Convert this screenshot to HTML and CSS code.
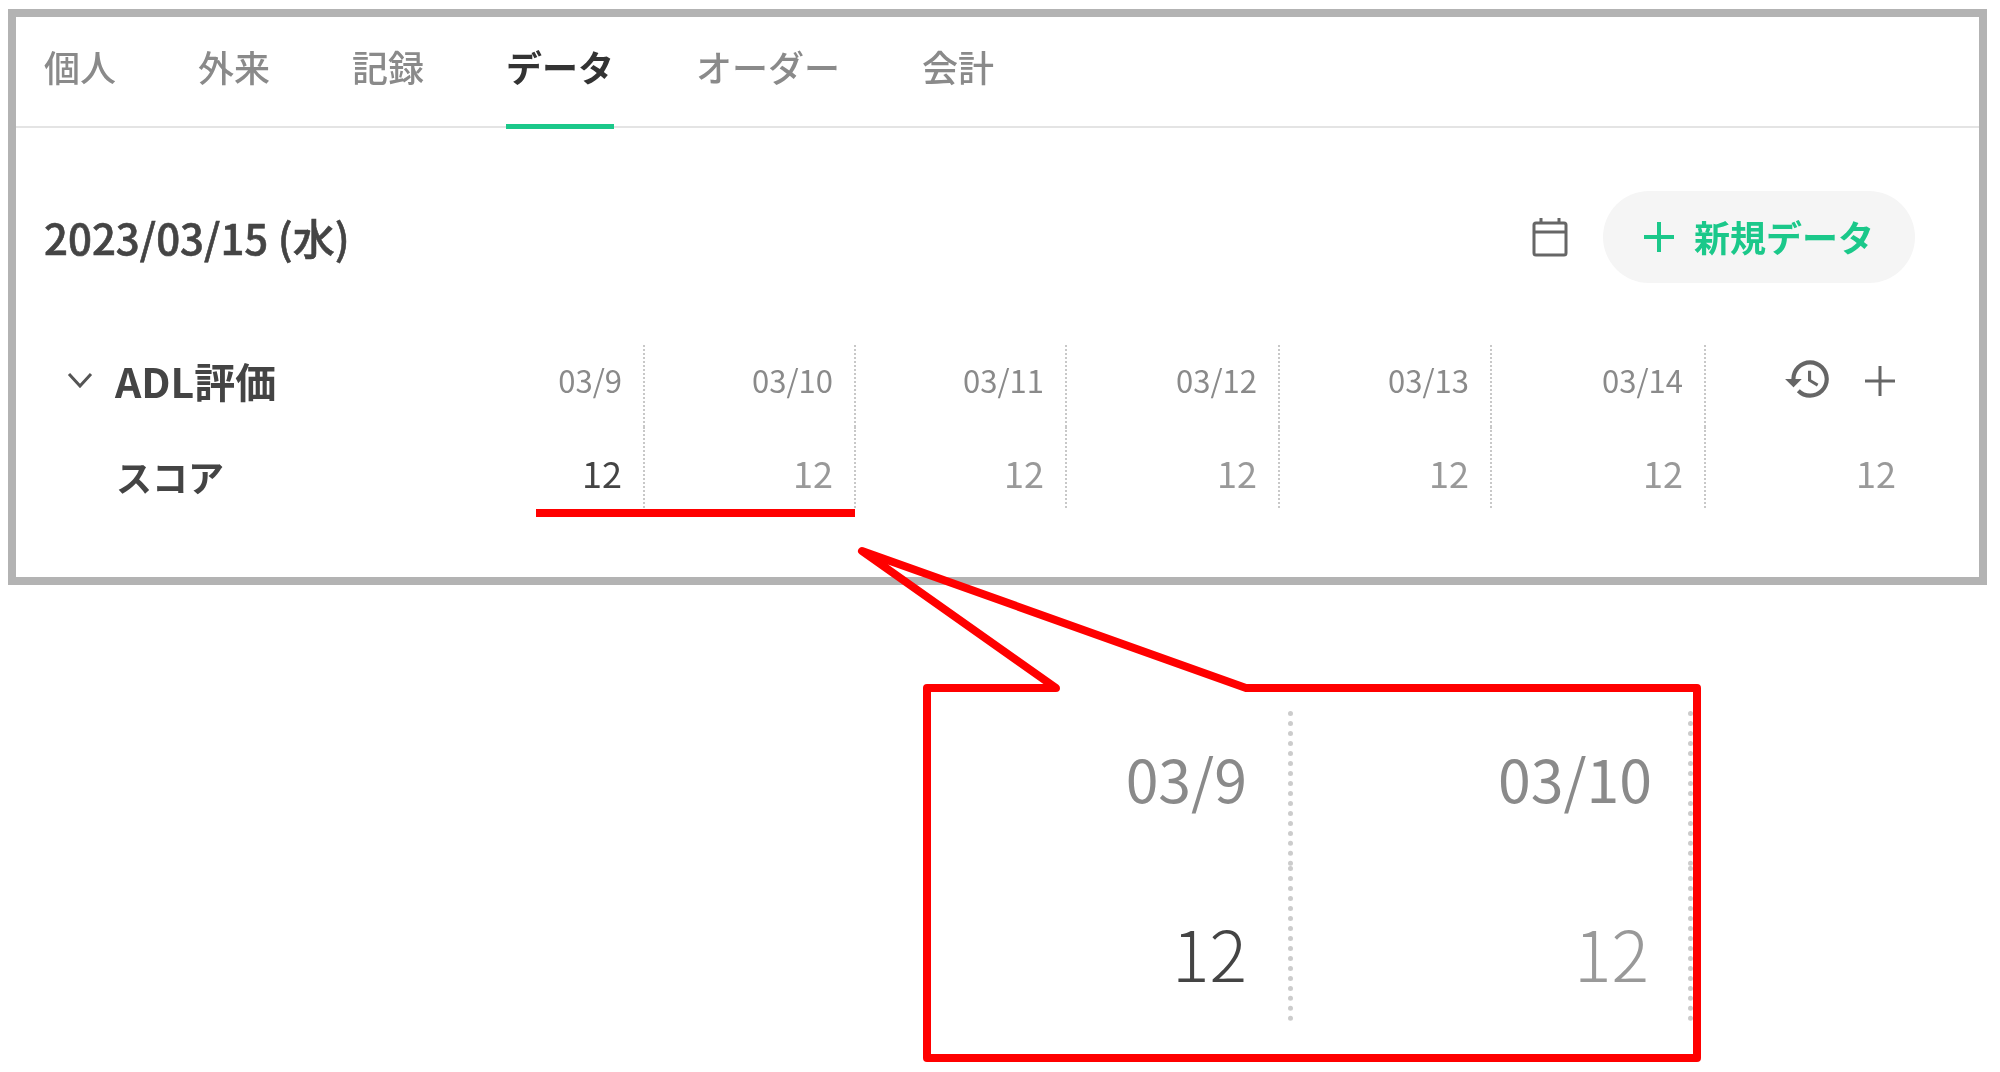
FILE: index.html
```html
<!DOCTYPE html>
<html lang="ja">
  <head>
    <meta charset="utf-8">
    <title>データ</title>
    <link rel="stylesheet" href="styles.css">
  </head>
  <body>
    <div class="panel">
      <div class="tabs">
        <span class="tab">個人</span>
        <span class="tab">外来</span>
        <span class="tab">記録</span>
        <span class="tab active">データ</span>
        <span class="tab">オーダー</span>
        <span class="tab">会計</span>
      </div>

      <div class="toolbar">
        <span class="today">2023/03/15 (水)</span>
        <svg class="cal-icon" viewBox="0 0 36 40" fill="none" stroke="#666" stroke-width="3">
          <rect x="2" y="6" width="32" height="32" rx="2"/>
          <path d="M2 15H34M9 1V7M27 1V7"/>
        </svg>
        <div class="new-btn">
          <svg class="new-plus" viewBox="0 0 32 32" fill="none" stroke="#1bc88a" stroke-width="4">
            <path d="M16 1V31M1 16H31"/>
          </svg>
          <span class="new-text">新規データ</span>
        </div>
      </div>

      <div class="table">
        <div class="label head-label">
          <svg class="chevron" viewBox="0 0 26 16" fill="none" stroke="#555" stroke-width="3">
            <path d="M2 2L13 14L24 2"/>
          </svg>
          <span>ADL評価</span>
        </div>
        <div class="cell date">03/9</div>
        <div class="cell date">03/10</div>
        <div class="cell date">03/11</div>
        <div class="cell date">03/12</div>
        <div class="cell date">03/13</div>
        <div class="cell date">03/14</div>
        <div class="cell last actions">
          <svg class="hist-icon" viewBox="0 0 24 24" fill="#666">
            <path d="M13 3a9 9 0 0 0-9 9H1l3.89 3.89.07.14L9 12H6c0-3.87 3.13-7 7-7s7 3.13 7 7-3.13 7-7 7c-1.93 0-3.68-.79-4.94-2.06l-1.42 1.42A8.954 8.954 0 0 0 13 21a9 9 0 0 0 0-18zm-1 5v5l4.28 2.54.72-1.21-3.5-2.08V8H12z"/>
          </svg>
          <svg class="add-icon" viewBox="0 0 32 32" fill="none" stroke="#666" stroke-width="3">
            <path d="M16 1V31M1 16H31"/>
          </svg>
        </div>

        <div class="label score-label">スコア</div>
        <div class="cell val current">12</div>
        <div class="cell val">12</div>
        <div class="cell val">12</div>
        <div class="cell val">12</div>
        <div class="cell val">12</div>
        <div class="cell val">12</div>
        <div class="cell val last">12</div>
      </div>
    </div>

    <div class="callout">
      <div class="big-cell big-date">03/9</div>
      <div class="big-cell big-date">03/10</div>
      <div class="big-cell big-val current">12</div>
      <div class="big-cell big-val">12</div>
    </div>

    <!-- red annotation drawn over the page -->
    <svg class="marks" viewBox="0 0 2000 1072" fill="none" stroke="#ff0000" stroke-width="8">
      <path d="M536 513H855"/>
      <path d="M927 688H1056L862 551L1246 688H1697V1058H927Z" stroke-linejoin="round"/>
    </svg>
  </body>
</html>
```

FILE: styles.css
```css
body {
  margin: 0;
  background-color: #fff;
  font-family: "Noto Sans CJK JP", "Noto Sans", sans-serif;
  color: #444;
  filter: blur(0.5px); /* the reference is a soft, resampled capture */
}

.panel {
  margin: 9px 13px 0 8px;
  border: 8px solid #b3b3b3;
}

/* tabs */
.tabs {
  display: flex;
  gap: 82px;
  height: 109px;
  padding-left: 28px;
  border-bottom: 2px solid #e4e4e4;
}

.tab {
  height: 112px;
  box-sizing: border-box;
  padding-top: 31px;
  border-bottom: 5px solid transparent;
  font-size: 36px;
  line-height: 36px;
  font-weight: 500;
  color: #8a8a8a;
}

.tab.active {
  color: #333;
  font-weight: 700;
  border-bottom-color: #1bc88a;
}

/* date and new button */
.toolbar {
  display: flex;
  align-items: center;
  margin-top: 63px;
  padding: 0 64px 0 28px;
}

.today {
  margin-right: auto;
  margin-bottom: 2px;
  font-size: 42px;
  font-weight: 500;
  -webkit-text-stroke: 0.6px #444;
}

.cal-icon {
  width: 36px;
  height: 40px;
  margin-right: 35px;
}

.new-btn {
  display: flex;
  align-items: center;
  gap: 19px;
  width: 312px;
  height: 92px;
  box-sizing: border-box;
  padding-left: 40px;
  border-radius: 46px;
  background-color: #f5f5f5;
  font-size: 36px;
  font-weight: 700;
  color: #1bc88a;
}

.new-plus {
  width: 32px;
  height: 32px;
}

.new-text {
  margin-bottom: 2px;
}

/* score table */
.table {
  display: grid;
  grid-template-columns: 389px 212px 211px 211px 213px 212px 214px 211px;
  grid-template-rows: 82px 81px;
  margin: 62px 0 69px 28px;
}

.label {
  font-weight: 700;
}

.head-label {
  display: flex;
  align-items: center;
  gap: 22px;
  height: 70px;
  padding-left: 23px;
  font-size: 41px;
}

.chevron {
  width: 26px;
  height: 16px;
}

.score-label {
  padding: 31px 0 0 72px;
  font-size: 36px;
  line-height: 36px;
}

.cell {
  box-sizing: border-box;
  padding-right: 21px;
  border-right: 2px dotted #c8c8c8;
  text-align: right;
}

.cell.last {
  border-right: none;
}

.date {
  padding-top: 19px;
  font-size: 31px;
  line-height: 31px;
  color: #8a8a8a;
}

.val {
  padding-top: 27px;
  font-size: 36px;
  line-height: 37px;
  color: #999;
}

.val.current {
  color: #444;
}

.actions {
  display: flex;
  justify-content: flex-end;
  align-items: flex-start;
  gap: 31px;
  padding: 9px 21px 0 0;
}

.hist-icon {
  width: 50px;
  height: 50px;
}

.add-icon {
  width: 32px;
  height: 32px;
  margin-top: 11px;
}

/* enlarged copy in the callout */
.callout {
  display: grid;
  grid-template-columns: 370px 400px;
  grid-template-rows: 155px 155px;
  width: 778px;
  height: 351px;
  margin: 99px 0 0 923px;
  padding-top: 27px;
}

.big-cell {
  box-sizing: border-box;
  padding-right: 41px;
  border-right: 5px dotted #ccc;
  text-align: right;
}

.big-cell:nth-child(even) {
  padding-right: 36px;
}

.big-date {
  padding-top: 37px;
  font-size: 59px;
  line-height: 60px;
  color: #8a8a8a;
}

.big-val {
  padding-top: 51px;
  font-size: 70px;
  line-height: 70px;
  font-weight: 300;
  color: #999;
}

.big-val.current {
  color: #444;
}

.big-val:nth-child(even) {
  padding-right: 39px;
}

.marks {
  position: absolute;
  top: 0;
  left: 0;
  width: 2000px;
  height: 1072px;
}
```
